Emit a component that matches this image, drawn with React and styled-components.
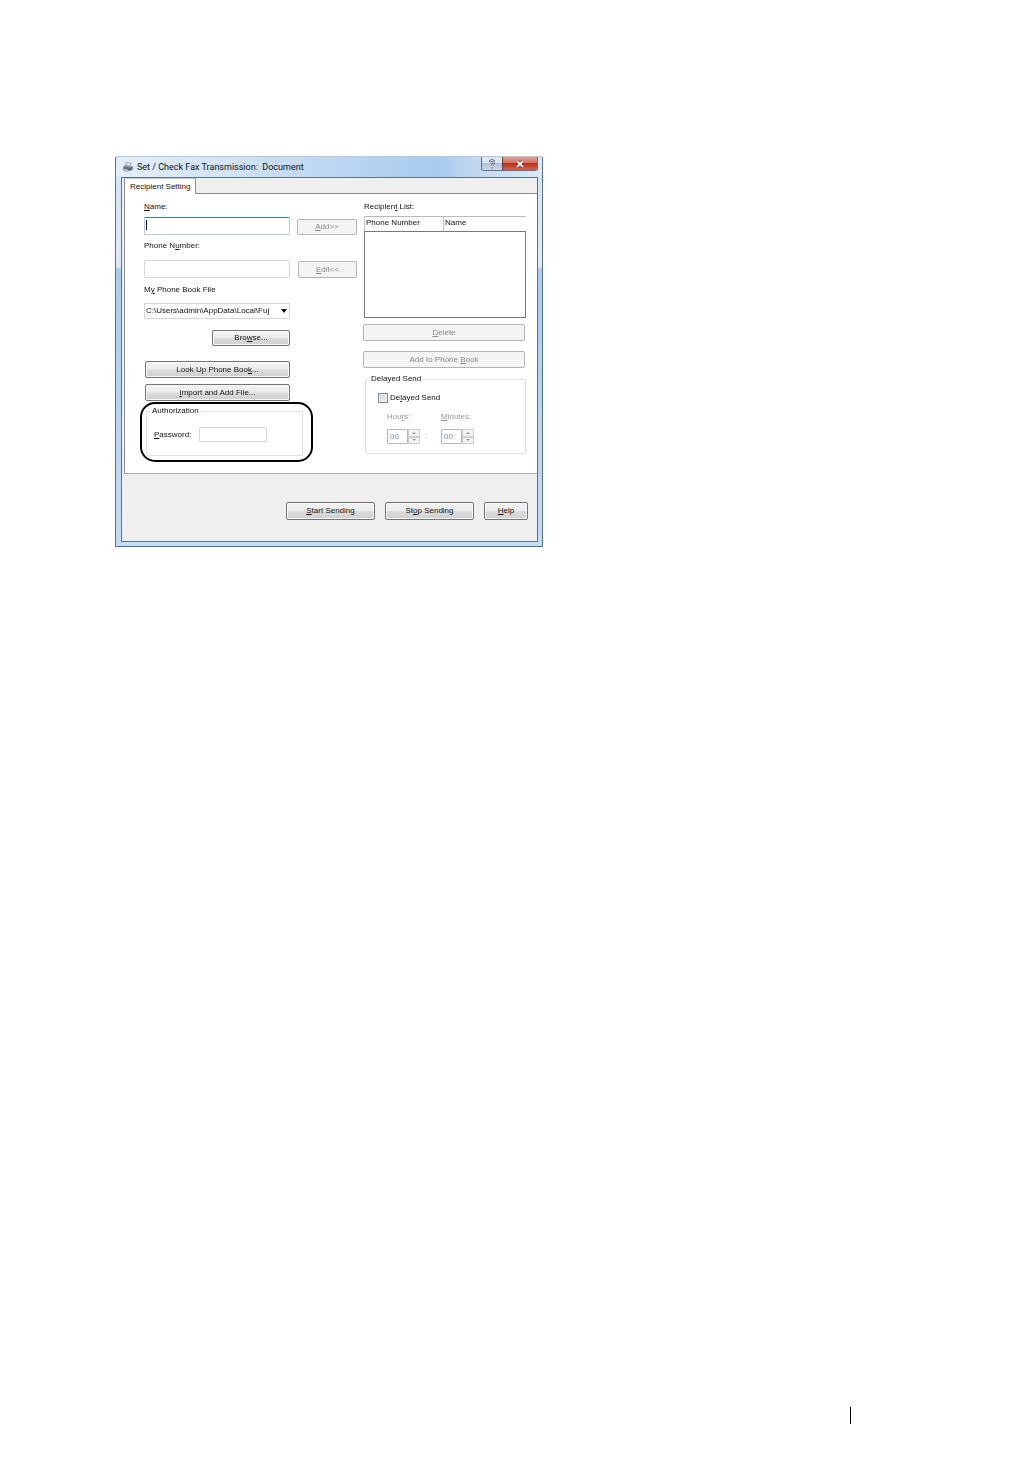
import { useState } from "react";
import styled, { createGlobalStyle, css } from "styled-components";

const GlobalStyles = createGlobalStyle`
  * {
    box-sizing: border-box;
  }

  body {
    margin: 0;
    background-color: #fff;
    color: #111;
    font-family: "Liberation Sans", Arial, sans-serif;
    font-size: 8px;
    line-height: 12px;
  }

  button,
  input,
  select {
    font: inherit;
    color: inherit;
  }
`;

const StyledPage = styled.div`
  min-height: 100vh;
  display: flex;
  flex-direction: column;
  padding: 156px 181px 34px 115px;
`;

const StyledDialog = styled.main`
  width: 100%;
  max-width: 428px;
  display: flex;
  flex-direction: column;
  padding: 0 4px 4px 5px;
  border: 1px solid #54718f;
  border-top-color: #b5c9de;
  border-radius: 3px 3px 1px 1px;
  background: linear-gradient(
    to bottom,
    #d3e4f6 0,
    #dfeaf6 110px,
    #a9cdf1 112px,
    #c3dcf5 100%
  );
`;

const StyledTitleBar = styled.header`
  height: 20px;
  display: flex;
  align-items: flex-start;
  gap: 4px;
  margin: 0 -4px 0 -5px;
  padding-left: 7px;
  background: linear-gradient(
    to right,
    #e3effa 0%,
    #cfe1f4 30%,
    #b5d3f1 60%,
    #a9cbee 76%,
    #c0d8f0 84%,
    #dbe9f6 100%
  );
  border-radius: 3px 3px 0 0;

  & > svg {
    width: 10px;
    height: 10px;
    margin-top: 5px;
  }
`;

const StyledTitle = styled.h1`
  flex: 1;
  margin: 4px 0 0;
  font-family: Roboto, "Open Sans", sans-serif;
  font-size: 9px;
  font-weight: 400;
  line-height: 12px;
  white-space: pre;
`;

const StyledCaptionButtons = styled.div`
  display: flex;
  height: 14px;
  margin-right: 4px;
  border: 1px solid #5f7082;
  border-top: none;
  border-radius: 0 0 3px 3px;
  overflow: hidden;
`;

const StyledCaptionButton = styled.button`
  display: flex;
  align-items: center;
  justify-content: center;
  width: 20px;
  padding: 0;
  border: none;
  background: linear-gradient(#dbe5ef 45%, #b3c3d4 50%, #ccdae7);

  ${(props) =>
    props.$close &&
    css`
      width: 35px;
      border-left: 1px solid #6b3a3a;
      background: linear-gradient(#e0a193 0, #d3715f 45%, #b9301d 50%, #cf6450);
    `}
`;

const StyledClient = styled.div`
  display: flex;
  flex-direction: column;
  border: 1px solid #5c7287;
  background-color: #efefef;
`;

const StyledTabList = styled.div`
  display: flex;
  height: 15px;
  padding-left: 2px;
`;

const StyledTab = styled.button`
  height: 16px;
  padding: 0 5px;
  border: 1px solid #8a8e94;
  border-top-color: #c5c8cc;
  border-bottom: none;
  background-color: #fff;
  white-space: nowrap;
  z-index: 1;
`;

const StyledTabPanel = styled.section`
  display: flex;
  justify-content: space-between;
  margin-left: 2px;
  padding: 7px 11px 17px 19px;
  border: 1px solid #8a8e94;
  border-right: none;
  border-bottom-color: #a9abae;
  background-color: #fff;
`;

const StyledColumn = styled.div`
  display: flex;
  flex-direction: column;
  width: ${(props) => props.$width};
`;

const StyledLabel = styled.label`
  height: 12px;
  margin: ${(props) => props.$margin || "0"};
  color: ${(props) => (props.$disabled ? "#999" : "inherit")};
  white-space: nowrap;
`;

const StyledFieldRow = styled.div`
  display: flex;
  align-items: flex-end;
  justify-content: space-between;
`;

const StyledInput = styled.input`
  width: ${(props) => props.$width || "146px"};
  height: ${(props) => props.$height || "18px"};
  padding: 0 2px;
  border: 1px solid #d3d6da;
  border-radius: 1px;
  background-color: #fff;
  outline: none;

  &:focus {
    border-color: #b5cfe7;
    border-top-color: #3d7bad;
  }

  /* Tall caret for the empty field */
  &:focus:placeholder-shown {
    caret-color: transparent;
    background: linear-gradient(#111, #111) 1px 2px / 1px 10px no-repeat #fff;
  }
`;

const StyledSelectBox = styled.div`
  position: relative;
  width: 146px;

  & select {
    display: block;
    appearance: none;
    width: 100%;
    height: 16px;
    padding: 0 15px 0 1px;
    border: 1px solid #d3d6da;
    border-radius: 0;
    background-color: #fff;
    text-overflow: clip;
  }

  & svg {
    position: absolute;
    right: 3px;
    top: 6px;
    width: 6px;
    height: 4px;
    pointer-events: none;
  }
`;

const StyledButton = styled.button`
  width: ${(props) => props.$width || "100%"};
  height: ${(props) => props.$height || "17px"};
  margin: ${(props) => props.$margin || "0"};
  padding: 0;
  border: 1px solid #747474;
  border-radius: 2px;
  background: linear-gradient(#f3f3f3 0, #ebebeb 48%, #dcdcdc 52%, #cfcfcf);
  box-shadow: inset 0 0 0 1px #f8f8f8;
  white-space: nowrap;

  &:disabled {
    border-color: #b2b5b8;
    background: #f4f4f4;
    box-shadow: none;
    color: #8a8a8a;
  }
`;

const StyledGroup = styled.fieldset`
  min-width: 0;
  height: ${(props) => props.$height};
  margin: ${(props) => props.$margin || "0"};
  padding: 0 0 0 ${(props) => props.$indent};
  border: 1px solid #dbe0e3;
  border-radius: 2px;

  & legend {
    height: 12px;
    margin-left: ${(props) => props.$legend};
    padding: 0 2px;
  }
`;

const StyledAuthorization = styled.div`
  position: relative;
  width: 157px;
  margin: 4px 0 0 2px;
`;

// Ring that highlights the authorization group
const StyledHighlight = styled.span`
  position: absolute;
  inset: -3px -10px -6px -6px;
  border: 2px solid #000;
  border-radius: 15px;
  pointer-events: none;
`;

const StyledInlineField = styled.div`
  display: flex;
  align-items: center;
  gap: ${(props) => props.$gap};
  margin-top: ${(props) => props.$top};
`;

const StyledTable = styled.table`
  width: 162px;
  margin: 3px 0 6px 1px;
  border-spacing: 0;
  table-layout: fixed;

  & th {
    height: 15px;
    padding: 0 0 2px 1px;
    border-top: 1px solid #b9b9b9;
    border-left: 1px solid #c4c4c4;
    font-weight: 400;
    text-align: left;
    vertical-align: top;
  }

  & th:first-child {
    width: 79px;
  }

  & td {
    height: 87px;
    padding: 0;
    border: 1px solid #767a7e;
  }
`;

const StyledCheckbox = styled.input`
  appearance: none;
  width: 10px;
  height: 10px;
  margin: 0;
  border: 1px solid #85898c;
  background: linear-gradient(135deg, #c9cdd0, #f4f4f4);
  box-shadow: inset 0 0 0 1px #f0f0f0;

  &:checked {
    background: #37618c;
  }
`;

const StyledTimeRow = styled.div`
  display: flex;
  align-items: flex-end;
  margin: 7px 0 0 9px;
`;

const StyledTimeField = styled.div`
  display: flex;
  flex-direction: column;
  gap: 6px;
  width: 33px;
`;

const StyledColon = styled.span`
  width: 21px;
  padding: 0 0 2px 5px;
  color: #999;
`;

const StyledSpinner = styled.div`
  display: flex;
  height: 15px;

  & input {
    width: 21px;
    padding: 0 0 0 2px;
    border: 1px solid #b5b8bb;
    border-radius: 1px;
    background-color: #fff;
    color: #8092a3;
  }

  & div {
    flex: 1;
    display: flex;
    flex-direction: column;
  }

  & button {
    flex: 1;
    display: flex;
    align-items: center;
    justify-content: center;
    min-height: 0;
    padding: 0;
    border: 1px solid #cfcfcf;
    background-color: #f3f3f3;
  }

  & svg {
    width: 4px;
    height: 2px;
  }
`;

const StyledActions = styled.footer`
  display: flex;
  flex-wrap: wrap;
  justify-content: flex-end;
  gap: 10px;
  padding: 28px 9px 21px;
`;

const StyledPageFooter = styled.footer`
  display: flex;
  justify-content: flex-end;
  margin-top: auto;
`;

const StyledRule = styled.span`
  width: 1px;
  height: 17px;
  background-color: #000;
`;

function PrinterIcon() {
  return (
    <svg viewBox="0 0 10 10" aria-hidden="true">
      <path d="M3 0.5 8 1.2 7.2 4.5 2.6 4z" fill="#e9edf2" stroke="#777f8a" strokeWidth="0.6" />
      <path d="M0.3 4.5 2.5 3.2 9.6 4.2 9.8 7.3 7 9 0.4 7.3z" fill="#626a75" />
      <path d="M0.3 4.5 2.5 3.2 9.6 4.2 7 5.6z" fill="#9aa2ad" />
      <path d="M1 6.6 5.8 7.8 4.6 9.6 0.3 8.2z" fill="#dce1e7" stroke="#555" strokeWidth="0.5" />
    </svg>
  );
}

function Arrow({ up, color = "#111" }) {
  return (
    <svg viewBox="0 0 6 4" preserveAspectRatio="none" aria-hidden="true">
      <path d={up ? "M0 4 3 0 6 4z" : "M0 0h6L3 4z"} fill={color} />
    </svg>
  );
}

function Spinner({ id, label }) {
  return (
    <StyledTimeField>
      <StyledLabel htmlFor={id} $disabled>
        {label}
      </StyledLabel>
      <StyledSpinner>
        <input id={id} type="text" defaultValue="00" disabled />
        <div>
          <button type="button" aria-label="Increase" disabled>
            <Arrow up color="#999" />
          </button>
          <button type="button" aria-label="Decrease" disabled>
            <Arrow color="#999" />
          </button>
        </div>
      </StyledSpinner>
    </StyledTimeField>
  );
}

function RecipientForm() {
  return (
    <StyledColumn $width="213px">
      <StyledLabel htmlFor="name" $margin="0 0 4px">
        <u>N</u>ame:
      </StyledLabel>
      <StyledFieldRow>
        <StyledInput id="name" type="text" placeholder=" " autoFocus />
        <StyledButton $width="60px" $height="16px" disabled>
          <u>A</u>dd&gt;&gt;
        </StyledButton>
      </StyledFieldRow>

      <StyledLabel htmlFor="phone" $margin="5px 0 8px">
        Phone N<u>u</u>mber:
      </StyledLabel>
      <StyledFieldRow>
        <StyledInput id="phone" type="text" />
        <StyledButton $width="59px" disabled>
          <u>E</u>dit&lt;&lt;
        </StyledButton>
      </StyledFieldRow>

      <StyledLabel htmlFor="book" $margin="6px 0 7px">
        M<u>y</u> Phone Book File
      </StyledLabel>
      <StyledSelectBox>
        <select id="book">
          <option>C:\Users\admin\AppData\Local\Fuj</option>
        </select>
        <Arrow />
      </StyledSelectBox>

      <StyledButton $width="78px" $height="16px" $margin="11px 0 15px 68px">
        Bro<u>w</u>se...
      </StyledButton>
      <StyledButton $width="145px" $margin="0 0 6px 1px">
        Look Up Phone Boo<u>k</u>...
      </StyledButton>
      <StyledButton $width="145px" $margin="0 0 0 1px">
        <u>I</u>mport and Add File...
      </StyledButton>

      <StyledAuthorization>
        <StyledGroup $height="51px" $indent="7px" $legend="-4px">
          <legend>Authorization</legend>
          <StyledInlineField $gap="8px" $top="10px">
            <StyledLabel htmlFor="password">
              <u>P</u>assword:
            </StyledLabel>
            <StyledInput
              id="password"
              type="password"
              $width="68px"
              $height="15px"
            />
          </StyledInlineField>
        </StyledGroup>
        <StyledHighlight />
      </StyledAuthorization>
    </StyledColumn>
  );
}

function RecipientList() {
  const [delayed, setDelayed] = useState(false);

  return (
    <StyledColumn $width="163px">
      <StyledLabel as="span" $margin="0 0 0 1px">
        Recipien<u>t</u> List:
      </StyledLabel>
      <StyledTable>
        <thead>
          <tr>
            <th>Phone Number</th>
            <th>Name</th>
          </tr>
        </thead>
        <tbody>
          <tr>
            <td colSpan={2} />
          </tr>
        </tbody>
      </StyledTable>
      <StyledButton $width="162px" disabled>
        <u>D</u>elete
      </StyledButton>
      <StyledButton $width="162px" $margin="10px 0 5px" disabled>
        Add to Phone <u>B</u>ook
      </StyledButton>

      <StyledGroup
        $height="81px"
        $margin="0 0 0 2px"
        $indent="12px"
        $legend="-9px"
      >
        <legend>Delayed Send</legend>
        <StyledInlineField $gap="2px" $top="7px">
          <StyledCheckbox
            id="delayed"
            type="checkbox"
            checked={delayed}
            onChange={(e) => setDelayed(e.target.checked)}
          />
          <StyledLabel htmlFor="delayed">
            De<u>l</u>ayed Send
          </StyledLabel>
        </StyledInlineField>
        <StyledTimeRow>
          <Spinner
            id="hours"
            label={
              <>
                Hou<u>r</u>s:
              </>
            }
          />
          <StyledColon>:</StyledColon>
          <Spinner
            id="minutes"
            label={
              <>
                <u>M</u>inutes:
              </>
            }
          />
        </StyledTimeRow>
      </StyledGroup>
    </StyledColumn>
  );
}

function App() {
  return (
    <>
      <GlobalStyles />
      <StyledPage>
        <StyledDialog>
          <StyledTitleBar>
            <PrinterIcon />
            <StyledTitle>Set / Check Fax Transmission:{"  "}Document</StyledTitle>
            <StyledCaptionButtons>
              <StyledCaptionButton type="button" aria-label="Help">
                <svg width="8" height="10" viewBox="0 0 8 10">
                  <path
                    d="M2 3.2C2 0.8 6 0.8 6 3.2 6 4.8 4 4.6 4 6.6M4 8v1.2"
                    fill="none"
                    stroke="#4d5a68"
                    strokeWidth="2.2"
                  />
                  <path
                    d="M2 3.2C2 0.8 6 0.8 6 3.2 6 4.8 4 4.6 4 6.6M4 8v1"
                    fill="none"
                    stroke="#fff"
                    strokeWidth="1"
                  />
                </svg>
              </StyledCaptionButton>
              <StyledCaptionButton type="button" aria-label="Close" $close>
                <svg width="10" height="8" viewBox="0 0 10 8">
                  <path d="M2 1.2 8 6.8M8 1.2 2 6.8" stroke="#6b3b3b" strokeWidth="3" />
                  <path d="M2 1.2 8 6.8M8 1.2 2 6.8" stroke="#fff" strokeWidth="1.8" />
                </svg>
              </StyledCaptionButton>
            </StyledCaptionButtons>
          </StyledTitleBar>

          <StyledClient>
            <StyledTabList role="tablist">
              <StyledTab type="button" role="tab" aria-selected="true">
                Recipient Setting
              </StyledTab>
            </StyledTabList>
            <StyledTabPanel role="tabpanel">
              <RecipientForm />
              <RecipientList />
            </StyledTabPanel>
            <StyledActions>
              <StyledButton $width="89px" $height="18px">
                <u>S</u>tart Sending
              </StyledButton>
              <StyledButton $width="89px" $height="18px">
                St<u>o</u>p Sending
              </StyledButton>
              <StyledButton $width="44px" $height="18px">
                <u>H</u>elp
              </StyledButton>
            </StyledActions>
          </StyledClient>
        </StyledDialog>

        <StyledPageFooter>
          <StyledRule />
        </StyledPageFooter>
      </StyledPage>
    </>
  );
}

export default App;
